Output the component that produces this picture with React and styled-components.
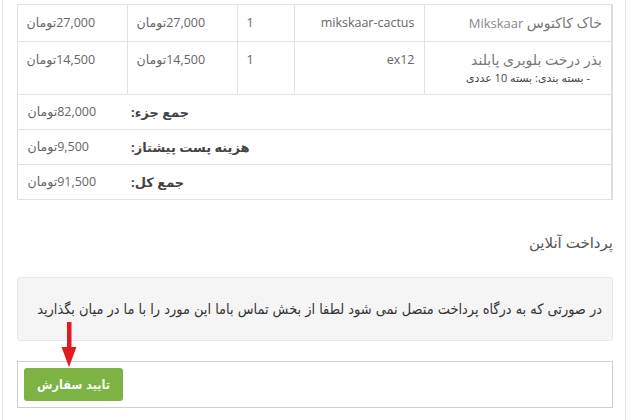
import React from "react";
import styled, { createGlobalStyle } from "styled-components";

const GlobalStyle = createGlobalStyle`
  html, body {
    margin: 0;
    padding: 0;
    background: #fff;
    overflow: hidden;
  }
  body {
    font-family: "Open Sans", "DejaVu Sans", sans-serif;
    font-size: 13px;
    color: #666;
  }
`;

const items = [
  {
    name: "خاک کاکتوس",
    brand: "Mikskaar",
    sku: "mikskaar-cactus",
    qty: 1,
    price: "27,000",
    total: "27,000",
  },
  {
    name: "بذر درخت بلوبری پابلند",
    meta: "- بسته بندی: بسته 10 عددی",
    sku: "ex12",
    qty: 1,
    price: "14,500",
    total: "14,500",
  },
];

const totals = [
  { label: "جمع جزء:", value: "82,000" },
  { label: "هزینه پست پیشتاز:", value: "9,500" },
  { label: "جمع کل:", value: "91,500" },
];

function App() {
  return (
    <>
      <GlobalStyle />
      <Panel>
        <OrderTable>
          <colgroup>
            <col style={{ width: 188 }} />
            <col style={{ width: 130 }} />
            <col style={{ width: 57 }} />
            <col style={{ width: 110 }} />
            <col style={{ width: 110 }} />
          </colgroup>
          <tbody>
            {items.map((item) => (
              <tr key={item.sku}>
                <Cell>
                  <ProductName>
                    {item.name}
                    {item.brand && <Brand> {item.brand}</Brand>}
                  </ProductName>
                  {item.meta && <Meta>{item.meta}</Meta>}
                </Cell>
                <Cell>{item.sku}</Cell>
                <Cell $left>{item.qty}</Cell>
                <Cell $left>
                  <Amount>{item.price}تومان</Amount>
                </Cell>
                <Cell $left>
                  <Amount>{item.total}تومان</Amount>
                </Cell>
              </tr>
            ))}
          </tbody>
          <tfoot>
            {totals.map((t) => (
              <tr key={t.label}>
                <TotalLabel colSpan={4}>{t.label}</TotalLabel>
                <TotalValue>
                  <Amount>{t.value}تومان</Amount>
                </TotalValue>
              </tr>
            ))}
          </tfoot>
        </OrderTable>

        <SectionTitle>پرداخت آنلاین</SectionTitle>

        <Notice>
          در صورتی که به درگاه پرداخت متصل نمی شود لطفا از بخش تماس باما این
          مورد را با ما در میان بگذارید
        </Notice>

        <ActionBox>
          <Arrow width="16" height="45" viewBox="0 0 16 45">
            <rect x="6" y="0" width="4.5" height="27" fill="#e21a1a" />
            <polygon points="0.5,25 15.5,25 8,45" fill="#e21a1a" />
          </Arrow>
          <SubmitButton>تایید سفارش</SubmitButton>
        </ActionBox>
      </Panel>
    </>
  );
}

export default App;

const Panel = styled.div`
  box-sizing: border-box;
  direction: rtl;
  margin: 0 5px 0 2px;
  padding: 4px 12px 0 14px;
  border-left: 1px solid #e6e6e6;
  border-right: 1px solid #e6e6e6;
  min-height: 100vh;
`;

const OrderTable = styled.table`
  width: 100%;
  border-collapse: collapse;
  table-layout: fixed;
  border: 1px solid #dcdcdc;
  border-right-width: 2px;
`;

const Cell = styled.td`
  padding: 8px 9px;
  border: 1px solid #e2e2e2;
  vertical-align: top;
  line-height: 19px;
  text-align: ${(p) => (p.$left ? "left" : "right")};
  color: #666;
  font-size: 12.5px;
`;

const ProductName = styled.div`
  color: #777;
  font-size: 14px;
  line-height: 19px;
`;

const Brand = styled.span`
  color: #888;
  font-size: 13px;
`;

const Meta = styled.div`
  padding-right: 12px;
  font-size: 11px;
  line-height: 17px;
  color: #444;
`;

const Amount = styled.span`
  color: #666;
`;

const TotalLabel = styled.th`
  padding: 8px 8px 8px 4px;
  border: 1px solid #e2e2e2;
  border-left: none;
  border-right: none;
  text-align: left;
  line-height: 18px;
  font-size: 13px;
  font-weight: bold;
  color: #444;
`;

const TotalValue = styled.td`
  padding: 8px 10px;
  border: 1px solid #e2e2e2;
  border-left: none;
  border-right: none;
  text-align: left;
  line-height: 18px;
  font-size: 12.5px;
`;

const SectionTitle = styled.h3`
  margin: 31px 0 0;
  font-size: 15px;
  font-weight: normal;
  line-height: 22px;
  color: #555;
`;

const Notice = styled.div`
  margin-top: 24px;
  padding: 19px 10px 19px 8px;
  background: #f5f5f5;
  border: 1px solid #e8e8e8;
  border-radius: 3px;
  line-height: 24px;
  font-family: "DejaVu Sans Condensed", "DejaVu Sans", sans-serif;
  font-stretch: condensed;
  font-size: 14.4px;
  white-space: nowrap;
  color: #333;
`;

const ActionBox = styled.div`
  position: relative;
  display: flex;
  justify-content: flex-end;
  margin-top: 20px;
  padding: 6px;
  border: 1px solid #cfcfcf;
`;

const Arrow = styled.svg`
  position: absolute;
  top: -40px;
  left: 43px;
`;

const SubmitButton = styled.button`
  height: 33px;
  padding: 0 13px;
  border: none;
  border-radius: 3px;
  background: #7cb342;
  color: #fff;
  font-family: "DejaVu Sans Condensed", "DejaVu Sans", sans-serif;
  font-stretch: condensed;
  font-size: 12.5px;
  font-weight: bold;
  cursor: pointer;
`;
